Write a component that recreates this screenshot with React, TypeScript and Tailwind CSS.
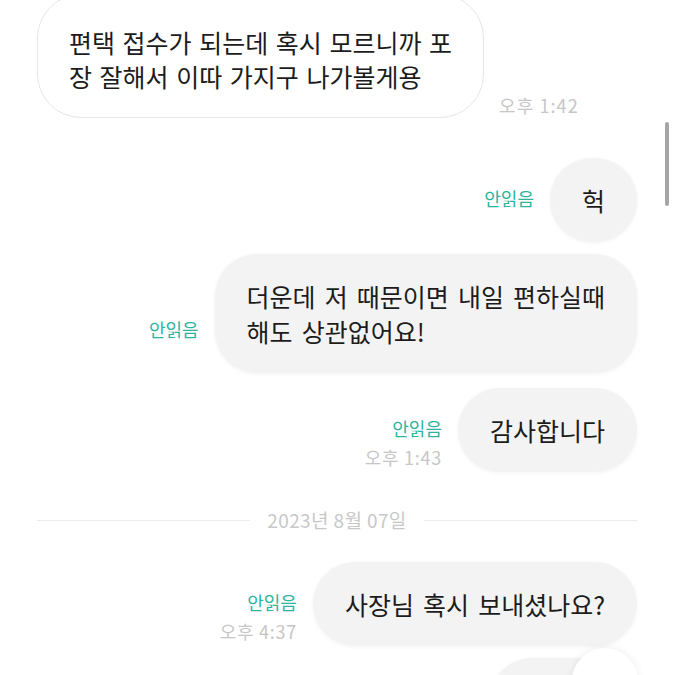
import React from 'react';

type Sent = {
  lines: string[];
  time?: string;
  mt: string;
};

const SENT: Sent[] = [
  { lines: ['헉'], mt: 'mt-[40px]' },
  { lines: ['더운데 저 때문이면 내일 편하실때', '해도 상관없어요!'], mt: 'mt-[12px]' },
  { lines: ['감사합니다'], time: '오후 1:43', mt: 'mt-[15px]' },
];

const SentRow: React.FC<{ msg: Sent }> = ({ msg }) => (
  <div className={`flex justify-end items-end gap-4 ${msg.mt}`}>
    <div className="flex flex-col items-end text-[18px] leading-[29px]">
      <span className="text-[#2cb49f]">안읽음</span>
      <span className={msg.time ? 'text-[#c6c6c6] tracking-[0.04em]' : 'invisible'}>{msg.time || '오후 0:00'}</span>
    </div>
    <div className="bg-[#f3f3f3] rounded-[42px] px-8 pt-[25px] pb-[24px] text-[25px] leading-[35px] [word-spacing:3.5px] text-[#1c1c1c] shadow-[0_1px_4px_rgba(0,0,0,0.05)]">
      {msg.lines.map((l, i) => (
        <div key={i}>{l}</div>
      ))}
    </div>
  </div>
);

const App: React.FC = () => {
  return (
    <div
      className="relative w-[675px] h-[675px] overflow-hidden bg-white"
      style={{ fontFamily: '"Noto Sans CJK KR", "Noto Sans", sans-serif' }}
    >
      <div className="pl-[37px] pr-[38px]">
        {/* received */}
        <div className="flex items-end gap-[15px] -mt-[6px]">
          <div className="bg-white border border-[#e6e6e6] rounded-[44px] pl-[31px] pr-[31px] pt-[30px] pb-[24px] text-[25px] leading-[34px] [word-spacing:2px] text-[#1c1c1c]">
            <div>편택 접수가 되는데 혹시 모르니까 포</div>
            <div>장 잘해서 이따 가지구 나가볼게용</div>
          </div>
          <span className="text-[18px] leading-[24px] tracking-[0.06em] text-[#c6c6c6] pb-[1px]">오후 1:42</span>
        </div>

        {SENT.map((m, i) => (
          <SentRow key={i} msg={m} />
        ))}

        {/* date divider */}
        <div className="flex items-center gap-[17px] mt-[36px]">
          <div className="flex-1 h-px bg-[#ececec]" />
          <span className="text-[19px] leading-[24px] tracking-[0.02em] text-[#c8c8c8]">2023년 8월 07일</span>
          <div className="flex-1 h-px bg-[#ececec]" />
        </div>

        <SentRow msg={{ lines: ['사장님 혹시 보내셨나요?'], time: '오후 4:37', mt: 'mt-[30px]' }} />

        <div className="flex justify-end mt-[12px]">
          <div className="w-[147px] h-[84px] bg-[#f3f3f3] rounded-[42px] shadow-[0_1px_4px_rgba(0,0,0,0.05)]" />
        </div>
      </div>

      {/* scroll thumb */}
      <div className="absolute left-[665px] top-[122px] w-[4px] h-[84px] rounded-full bg-[#a6a6a6]" />

      {/* scroll-down button */}
      <div className="absolute left-[572px] top-[648px] w-[66px] h-[66px] rounded-full bg-white shadow-[0_0_8px_rgba(0,0,0,0.08)]" />
    </div>
  );
};

export default App;
